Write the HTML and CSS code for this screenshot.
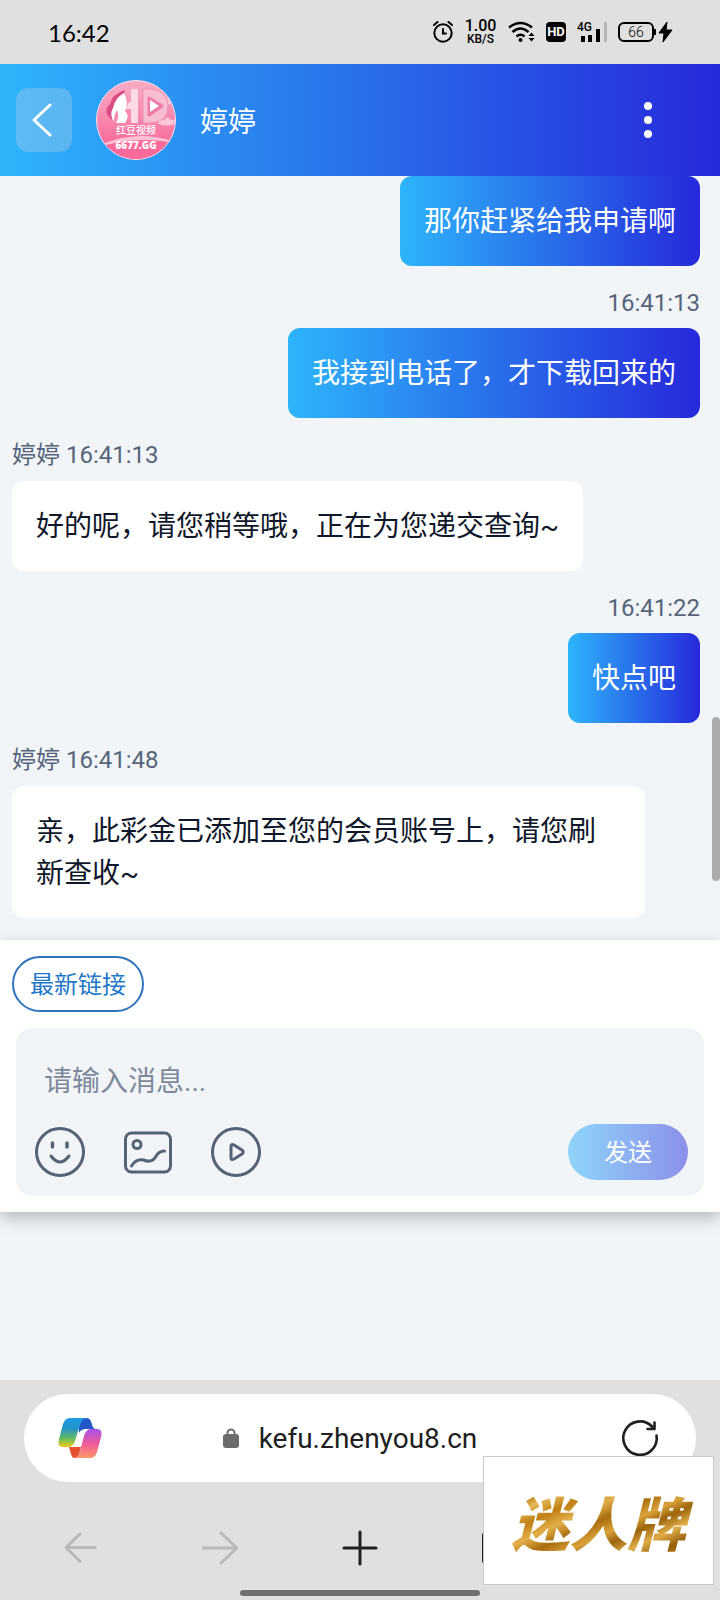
FILE: index.html
```
<!DOCTYPE html>
<html lang="zh-CN">

<head>
    <meta charset="UTF-8">
    <meta name="viewport" content="width=device-width, initial-scale=1.0">
    <title>婷婷</title>
    <link rel="stylesheet" href="styles.css">
</head>

<body>
    <div class="status-bar">
        <span class="clock">16:42</span>
        <div class="status-icons">
            <svg width="20" height="22" viewBox="0 0 20 22" fill="none" stroke="#000" stroke-width="2" stroke-linecap="round">
                <circle cx="10" cy="12" r="8.7"/>
                <path d="M10 8v4.500h3M1 4l3.500-3M19 4l-3.500-3"/>
            </svg>
            <span class="speed"><b>1.00</b><small>KB/S</small></span>
            <svg width="27" height="22" viewBox="0 0 27 22" fill="none" stroke="#000" stroke-width="2.600">
                <path d="M1 6.500Q12.500-2.500 24 6.500M4.500 11Q12.500 4 20.500 11M8.500 15.500Q12.500 12 16.500 15.500"/>
                <circle cx="12.500" cy="19" r="2" fill="#000" stroke="none"/>
                <path d="M20.500 15l3-3.500 3 3.500zM20.500 17l3 3.500 3-3.500z" fill="#000" stroke="none"/>
            </svg>
            <span class="hd">HD</span>
            <span class="signal">
                <em>4G</em>
                <svg width="30" height="20" viewBox="0 0 30 20">
                    <path d="M4 14h4v6h-4zM11 13h4v7h-4zM19 7h4v13h-4z"/>
                    <path d="M27 0h3v20h-3z" fill="#b4b4b4"/>
                </svg>
            </span>
            <span class="power">
                <span class="battery">66</span>
                <svg width="16" height="22" viewBox="0 0 16 22"><path d="M9 1L1 12h5l-1 9 9-12H8z" stroke="#000" stroke-linejoin="round"/></svg>
            </span>
        </div>
    </div>

    <header class="chat-header">
        <button class="back" aria-label="返回">
            <svg width="20" height="34" viewBox="0 0 20 34" fill="none" stroke="#fff" stroke-width="3" stroke-linecap="round" stroke-linejoin="round"><path d="M18 2L2 17l16 15"/></svg>
        </button>
        <svg class="avatar" viewBox="0 0 80 80">
            <defs>
                <linearGradient id="pink" x1="0" y1="0" x2="0" y2="1">
                    <stop offset="0" stop-color="#f7adc6"/>
                    <stop offset=".5" stop-color="#fa86ae"/>
                    <stop offset="1" stop-color="#f4588c"/>
                </linearGradient>
                <clipPath id="round"><circle cx="40" cy="40" r="39"/></clipPath>
            </defs>
            <circle cx="40" cy="40" r="39.500" fill="url(#pink)" stroke="#fbe3ea"/>
            <g clip-path="url(#round)">
                <path d="M-4 70Q40 46 84 66v20H-4z" fill="#fb6a9b"/>
                <path d="M-4 69Q40 46 84 64Q40 54-4 69z" fill="#ffc1d6"/>
                <path d="M62 44q1-6 6-4 3-5 7 0 6-1 5 4-8 3-18 0zM65 16q8 0 12 9-9-1-12-9z" fill="#fbc6d8"/>
            </g>
            <path d="M29 10q-13 4-15 14-7 6-1 13l5 5q-4-9 1-14 7-6 10-18z" fill="#d94d84"/>
            <path d="M28 13q-9 5-11 15-4 7 1 14 0-8 3-12 3 6-1 13h9q5-7 0-12 4-8-1-18z" fill="#fff"/>
            <path d="M35 9h7v34h-7V29h-5l3-7h2z" fill="#fcdbe6"/>
            <path d="M47 9h8q17 1 17 17T55 43h-8z" fill="#f9bdd2" stroke="#ef8fb1"/>
            <path d="M53 18l13 8-13 9z" fill="#ef7ba6" stroke="#ef7ba6" stroke-width="3" stroke-linejoin="round"/>
            <path d="M54 20l9 6-9 6z" fill="#fff"/>
            <text x="40" y="54" class="avatar-name">红豆视频</text>
            <text x="40" y="69" class="avatar-site">6677.GG</text>
        </svg>
        <h1>婷婷</h1>
        <button class="more" aria-label="更多">
            <svg width="8" height="36" viewBox="0 0 8 36" fill="#fff"><circle cx="4" cy="4" r="4"/><circle cx="4" cy="18" r="4"/><circle cx="4" cy="32" r="4"/></svg>
        </button>
    </header>

    <main class="chat">
        <div class="message sent">
            <p class="bubble">那你赶紧给我申请啊</p>
        </div>
        <div class="message sent">
            <div class="meta">16:41:13</div>
            <p class="bubble">我接到电话了，才下载回来的</p>
        </div>
        <div class="message received">
            <div class="meta">婷婷 16:41:13</div>
            <p class="bubble">好的呢，请您稍等哦，正在为您递交查询~</p>
        </div>
        <div class="message sent">
            <div class="meta">16:41:22</div>
            <p class="bubble">快点吧</p>
        </div>
        <div class="message received">
            <div class="meta">婷婷 16:41:48</div>
            <p class="bubble">亲，此彩金已添加至您的会员账号上，请您刷新查收~</p>
        </div>
        <div class="scroll-thumb"></div>
    </main>

    <section class="composer">
        <button class="quick-link">最新链接</button>
        <form class="input-box">
            <input type="text" placeholder="请输入消息..." aria-label="请输入消息">
            <div class="tools">
                <button type="button" aria-label="表情">
                    <svg width="52" height="52" viewBox="0 0 52 52">
                        <circle cx="26" cy="26" r="23.500"/>
                        <path d="M18.500 17v4M33 17v4" stroke-width="3.500"/>
                        <path d="M17 30q9 12 18 0"/>
                    </svg>
                </button>
                <button type="button" aria-label="图片">
                    <svg width="52" height="52" viewBox="0 0 52 52">
                        <rect x="3.500" y="7" width="45" height="39" rx="6"/>
                        <circle cx="15" cy="18.500" r="4"/>
                        <path d="M9.500 40c3-5 7-7 12-6 5 2 9 2 12-3 2-4 4-6 9-6"/>
                    </svg>
                </button>
                <button type="button" aria-label="视频">
                    <svg width="52" height="52" viewBox="0 0 52 52">
                        <circle cx="26" cy="26" r="23.500"/>
                        <path d="M21 20.500v11q0 3 3 1.500l8-5q2.500-2 0-4l-8-5q-3-1.500-3 1.500z"/>
                    </svg>
                </button>
                <button type="submit" class="send">发送</button>
            </div>
        </form>
    </section>

    <footer class="browser">
        <div class="address-bar">
            <button aria-label="Copilot">
                <svg width="44" height="40" viewBox="0 0 44 40">
                    <defs>
                        <linearGradient id="cool" x1="0" y1="0" x2="0" y2="1">
                            <stop offset="0" stop-color="#1b9de2"/>
                            <stop offset=".35" stop-color="#2593cc"/>
                            <stop offset=".7" stop-color="#62bb62"/>
                            <stop offset="1" stop-color="#f0cb16"/>
                        </linearGradient>
                        <linearGradient id="warm" x1="0" y1="0" x2="0" y2="1">
                            <stop offset="0" stop-color="#a853e8"/>
                            <stop offset=".5" stop-color="#ec5a9a"/>
                            <stop offset="1" stop-color="#fd9a66"/>
                        </linearGradient>
                    </defs>
                    <path d="M21 9Q23 0 28 0C33 0 33 4 34.500 8Q35.500 11 38 11H28Q23 11 21 15z" fill="#2257ca"/>
                    <path d="M11 29H23L21 36Q20 40 17 40C13 40 13 35 11 29z" fill="#e3512f"/>
                    <path d="M12 0H29Q24 0 22 7L17 23Q15 29 10 29H5Q-1 29 1 21L5 6Q7 0 12 0z" fill="url(#cool)"/>
                    <path d="M33 40H16Q20 40 22 33L26 18Q28 11 33 11H39Q45 11 43 19L39 34Q37 40 33 40z" fill="url(#warm)"/>
                </svg>
            </button>
            <a href="#" class="url">
                <svg width="16" height="20" viewBox="0 0 16 20"><path d="M4.500 8V5a3.500 3.500 0 0 1 7 0v3" fill="none" stroke="#6b6b6b" stroke-width="2"/><rect y="6" width="16" height="14" rx="3" fill="#6b6b6b"/></svg>
                kefu.zhenyou8.cn
            </a>
            <button aria-label="刷新">
                <svg width="36" height="36" viewBox="0 0 36 36" fill="none" stroke="#202020" stroke-width="2.600" stroke-linecap="round" stroke-linejoin="round">
                    <path d="M34.500 15.500A16.700 16.700 0 1 1 30 6.500M32.500 2.500V9H25.500"/>
                </svg>
            </button>
        </div>
        <nav class="nav-bar">
            <button disabled aria-label="后退">
                <svg viewBox="0 0 36 36"><path d="M33 17.500H4M18 4L4 17.500l14 14"/></svg>
            </button>
            <button disabled aria-label="前进">
                <svg viewBox="0 0 36 36"><path d="M1 18h34M19 3l16 15-16 15"/></svg>
            </button>
            <button aria-label="新建标签页">
                <svg viewBox="0 0 36 36"><path d="M18 2v32M2 18h32"/></svg>
            </button>
            <button aria-label="标签页">
                <svg viewBox="0 0 36 36"><rect x="1" y="2" width="32" height="32" rx="5"/></svg>
            </button>
            <button aria-label="菜单">
                <svg viewBox="0 0 36 36"><path d="M3 8h30M3 18h30M3 28h30"/></svg>
            </button>
        </nav>
        <div class="home-indicator"></div>
    </footer>

    <div class="watermark"><span>迷人牌</span></div>
</body>

</html>
```

FILE: styles.css
```
* {
    box-sizing: border-box;
}

body {
    display: flex;
    flex-direction: column;
    min-height: 100vh;
    margin: 0;
    background: #f1f5f8;
    font-family: Roboto, "Noto Sans CJK SC", sans-serif;
    font-size: 28px;
}

button {
    padding: 0;
    border: none;
    background: none;
    font: inherit;
    cursor: pointer;
}

svg {
    display: block;
    flex-shrink: 0;
}

/* Status bar */
.status-bar {
    display: flex;
    justify-content: space-between;
    align-items: center;
    height: 64px;
    padding: 0 46px 0 48px;
    background: #e0e0e0;
    color: #000;
}

.clock {
    font-family: Lato, sans-serif;
    font-size: 24px;
}

.status-icons {
    display: flex;
    align-items: center;
    gap: 11px;
}

.speed {
    display: flex;
    flex-direction: column;
    align-items: center;
    width: 33px;
    font-size: 16px;
    line-height: 14px;
}

.speed b {
    font-weight: 500;
}

.speed small {
    font-size: 12px;
    font-weight: 500;
    line-height: 12px;
}

.hd {
    width: 20px;
    border-radius: 4px;
    background: #000;
    color: #fff;
    font-size: 13px;
    font-weight: 700;
    line-height: 20px;
    text-align: center;
}

.signal {
    position: relative;
}

.signal em {
    position: absolute;
    top: 0;
    left: 0;
    font-size: 12px;
    font-style: normal;
    font-weight: 500;
    line-height: 11px;
}

.power {
    display: flex;
    align-items: center;
    gap: 4px;
}

.battery {
    position: relative;
    width: 36px;
    border: 2px solid #000;
    border-radius: 6px;
    font-size: 14px;
    font-weight: 300;
    line-height: 16px;
    text-align: center;
}

.battery::after {
    content: "";
    position: absolute;
    top: 5px;
    right: -4px;
    width: 2px;
    height: 6px;
    background: #000;
}

/* Header */
.chat-header {
    display: flex;
    align-items: center;
    height: 112px;
    padding: 0 68px 0 16px;
    background: linear-gradient(90deg, #2db5fb, #2629db);
    color: #fff;
}

.back {
    display: flex;
    justify-content: center;
    align-items: center;
    width: 56px;
    height: 64px;
    padding-right: 4px;
    border-radius: 12px;
    background: rgba(203, 213, 225, 0.3);
}

.avatar {
    width: 80px;
    height: 80px;
    margin: 0 24px;
}

.avatar-name,
.avatar-site {
    fill: #fff;
    text-anchor: middle;
    font-size: 10px;
    font-weight: 500;
}

.avatar-site {
    font-family: "Open Sans", sans-serif;
    font-weight: 800;
}

.chat-header h1 {
    flex: 1;
    margin: 0;
    font-size: 28px;
    font-weight: 400;
}

/* Messages */
.chat {
    position: relative;
    padding: 0 20px 22px 12px;
}

.message {
    display: flex;
    flex-direction: column;
    align-items: flex-start;
}

.message.sent {
    align-items: flex-end;
}

.meta {
    padding: 23px 0 11px;
    color: #56647a;
    font-size: 24px;
    line-height: 28px;
}

.received .meta {
    line-height: 29px;
}

.bubble {
    max-width: 92%;
    margin: 0;
    padding: 25px 24px 23px;
    border-radius: 12px;
    background: #fff;
    color: #0f172a;
    line-height: 42px;
}

.sent .bubble {
    background: linear-gradient(90deg, #2db5fb, #2629db);
    color: #fff;
}

.scroll-thumb {
    position: absolute;
    right: 0;
    bottom: 59px;
    width: 8px;
    height: 164px;
    border-radius: 4px;
    background: #a9abad;
}

/* Composer */
.composer {
    padding: 16px;
    background: #fff;
    box-shadow: 0 6px 16px rgba(0, 0, 0, 0.25);
}

.quick-link {
    display: block;
    height: 56px;
    margin: 0 0 16px -4px;
    padding: 0 16px 4px;
    border: 2px solid #2f74bd;
    border-radius: 28px;
    color: #2277c9;
    font-size: 24px;
}

.input-box {
    padding: 28px 16px 16px 18px;
    border-radius: 16px;
    background: #f1f5f8;
}

.input-box input {
    display: block;
    width: 100%;
    height: 48px;
    margin-bottom: 20px;
    padding: 2px 10px 0;
    border: none;
    outline: none;
    background: none;
    font: inherit;
}

.input-box input::placeholder {
    color: #7d899b;
}

.tools {
    display: flex;
    align-items: center;
    gap: 36px;
}

.tools svg {
    fill: none;
    stroke: #566376;
    stroke-width: 3;
    stroke-linecap: round;
    stroke-linejoin: round;
}

.tools .send {
    width: 120px;
    height: 56px;
    margin-left: auto;
    padding-bottom: 4px;
    border-radius: 28px;
    background: linear-gradient(90deg, #8fd5fa, #8c8fea);
    color: #fff;
    font-size: 24px;
}

/* Browser controls */
.browser {
    margin-top: auto;
    padding: 14px 24px 4px;
    background: #e0e0e0;
}

.address-bar {
    display: flex;
    justify-content: space-between;
    align-items: center;
    height: 88px;
    padding: 0 38px 0 34px;
    border-radius: 44px;
    background: #fff;
}

.url {
    display: flex;
    align-items: center;
    gap: 20px;
    margin-right: 24px;
    color: #202020;
    text-decoration: none;
}

.nav-bar {
    display: flex;
    justify-content: space-between;
    padding: 48px 38px 24px;
}

.nav-bar svg {
    width: 36px;
    height: 36px;
    fill: none;
    stroke: #202020;
    stroke-width: 3;
    stroke-linecap: round;
    stroke-linejoin: round;
}

.nav-bar button:disabled svg {
    stroke: #b8b8b8;
}

.home-indicator {
    width: 240px;
    height: 6px;
    margin: 0 auto;
    border-radius: 3px;
    background: #6f6f6f;
}

.watermark {
    position: fixed;
    right: 6px;
    bottom: 15px;
    display: flex;
    justify-content: center;
    align-items: center;
    width: 231px;
    height: 129px;
    border: 1px solid #c8c8c8;
    background: #fff;
}

.watermark span {
    padding: 0 10px;
    background: linear-gradient(155deg, #c98a1c, #b07410 12%, #e6b955 20%, #c07f14 30%, #e3b04a 40%, #a96c0d 50%, #d9a23a 60%, #9c640c 68%, #e0ae48 78%, #94600c 88%, #c98a1c);
    background-clip: text;
    -webkit-background-clip: text;
    color: transparent;
    font-family: "Noto Sans CJK SC", sans-serif;
    font-size: 58px;
    font-style: italic;
    font-weight: 900;
    line-height: 64px;
}
```
